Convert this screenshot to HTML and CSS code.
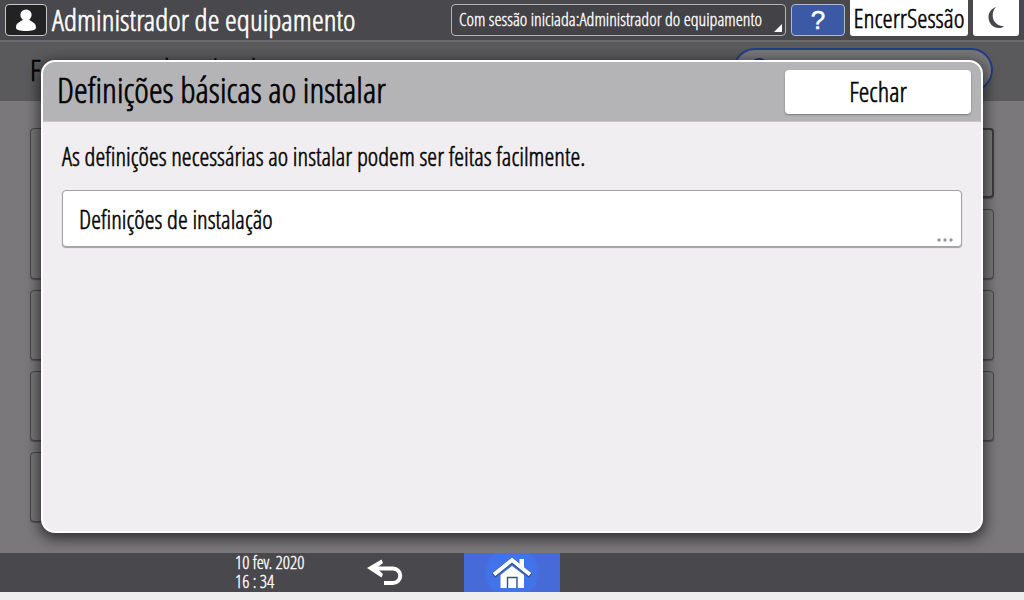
FILE: index.html
```html
<!DOCTYPE html>
<html lang="pt">
<head>
<meta charset="utf-8">
<meta name="viewport" content="width=device-width, initial-scale=1">
<title>Definições básicas ao instalar</title>
<link rel="stylesheet" href="styles.css">
</head>
<body>
<div class="screen">
  <header class="topbar">
    <span class="user-badge">
      <svg width="22" height="23" viewBox="0 0 22 23" aria-hidden="true"><circle cx="11" cy="6" r="5.6" fill="#fff"/><path d="M8 10.500C5 13.500 1 13.500 1 18.500c0 2.600 4.500 3.500 10 3.500s10-.9 10-3.500c0-5-4-5-7-8z" fill="#fff"/></svg>
    </span>
    <h1 class="topbar-title">Administrador de equipamento</h1>
    <div class="session">
      <select class="session-select" aria-label="Sessão"><option>Com sessão iniciada:Administrador do equipamento</option></select>
      <svg class="session-corner" width="8" height="8" viewBox="0 0 8 8" aria-hidden="true"><path d="M8 0v8H0z" fill="#fff"/></svg>
    </div>
    <button class="help" type="button" aria-label="Ajuda">?</button>
    <button class="logout" type="button">EncerrSessão</button>
    <button class="sleep" type="button" aria-label="Economia de energia">
      <svg width="18" height="24" viewBox="0 0 18 24" aria-hidden="true"><path d="M9 1C4 3 1.500 6.500 1.500 11c0 6.500 4.500 11 10.500 11 2 0 4-.7 5-1.800C11 20 6.500 16.500 5.800 11 5.400 7 6.500 3.500 9 1z" fill="#48474b"/></svg>
    </button>
  </header>

  <main class="stage">
    <div class="page-head">
      <h2 class="page-title">Ferramentas do utilizador</h2>
      <div class="search">
        <svg width="20" height="20" viewBox="0 0 20 20" aria-hidden="true"><circle cx="9" cy="9" r="7" fill="none" stroke="#1c3272" stroke-width="4"/></svg>
      </div>
    </div>
    <div class="tiles">
      <div class="tile tile-tall"></div>
      <div class="tile tile-active"></div>
      <div class="tile"></div>
      <div class="tile"></div>
      <div class="tile"></div>
      <div class="tile"></div>
      <div class="tile"></div>
      <div class="tile"></div>
    </div>

    <section class="dialog" role="dialog" aria-labelledby="dialog-title">
      <div class="dialog-head">
        <h2 class="dialog-title" id="dialog-title">Definições básicas ao instalar</h2>
        <button class="close" type="button">Fechar</button>
      </div>
      <div class="dialog-body">
        <p class="intro">As definições necessárias ao instalar podem ser feitas facilmente.</p>
        <button class="entry" type="button">
          <span>Definições de instalação</span>
          <svg class="entry-more" width="16" height="4" viewBox="0 0 16 4" aria-hidden="true"><g fill="#98989c"><circle cx="2" cy="2" r="1.700"/><circle cx="8" cy="2" r="1.700"/><circle cx="14" cy="2" r="1.700"/></g></svg>
        </button>
      </div>
    </section>
  </main>

  <footer class="bottombar">
    <div class="bottom-left">
      <div class="clock"><span>10 fev. 2020</span><span>16 : 34</span></div>
      <button class="back" type="button" aria-label="Voltar">
        <svg width="36" height="28" viewBox="0 0 36 28" aria-hidden="true"><path d="M6 9.500h20a7.200 7.200 0 0 1 0 14.500H17" fill="none" stroke="#fff" stroke-width="4"/><path d="M0 9L14.500.5 16 4 9.500 9l6.500 6-1.500 3.500z" fill="#fff"/></svg>
      </button>
    </div>
    <button class="home" type="button" aria-label="Início">
      <svg width="40" height="32" viewBox="0 0 40 32" aria-hidden="true"><path d="M8.500 31V18L20 9l12 9v13z" fill="#fff"/><path d="M15.500 31V20.500h9.500V31" fill="none" stroke="#34508f" stroke-width="1.400"/><path d="M1.500 18.500L20 3.500l18.500 15" fill="none" stroke="#34508f" stroke-width="5.500"/><path d="M27.500 2h4.500v9l-4.500-3.500z" fill="#fff"/><path d="M2 17.500L20 3l18 14.500" fill="none" stroke="#fff" stroke-width="4"/></svg>
    </button>
  </footer>
</div>
</body>
</html>
```
FILE: styles.css
```css
* {
  box-sizing: border-box;
  -webkit-text-stroke: 0.02em currentColor;
}

body {
  margin: 0;
  background: #eee;
  color: #000;
  font-family: "Open Sans Condensed Light", "Roboto Condensed", "Noto Sans", sans-serif;
  font-weight: 300;
}

h1, h2, p { margin: 0; font-weight: 300; }
button, select { font-family: inherit; font-weight: 300; color: inherit; margin: 0; padding: 0; border: 0; }
button { cursor: pointer; }
svg { display: block; }

.screen {
  display: flex;
  flex-direction: column;
  min-height: 100vh;
  padding-bottom: 8px;
}

.topbar {
  display: flex;
  align-items: center;
  gap: 5px;
  height: 40px;
  padding: 0 5px;
  background: #49484c;
  color: #fff;
}

.user-badge {
  display: flex;
  align-items: center;
  justify-content: center;
  width: 42px;
  height: 32px;
  border: 1px solid #c8c8c8;
  border-radius: 4px;
  background: #222124;
}

.topbar-title { flex: 1; font-size: 30px; line-height: 36px; white-space: nowrap; }

.session { position: relative; width: 335px; }
.session-select {
  appearance: none;
  display: block;
  width: 100%;
  height: 32px;
  padding: 0 7px 2px;
  border: 1px solid #b4b4b6;
  border-radius: 4px;
  background: #434246;
  color: #fff;
  font-size: 18px;
}
.session-corner { position: absolute; right: 4px; bottom: 4px; pointer-events: none; }

.help {
  width: 54px;
  height: 32px;
  border: 1px solid #b4b8c8;
  border-radius: 4px;
  background: #3b59a4;
  color: #fff;
  font-family: "Liberation Sans", sans-serif;
  font-size: 26px;
  line-height: 28px;
}

.logout, .sleep {
  align-self: flex-start;
  height: 36px;
  border-radius: 0 0 3px 3px;
  background: #fff;
  color: #000;
}
.logout { width: 118px; font-size: 26px; white-space: nowrap; }
.sleep { display: flex; align-items: center; justify-content: center; width: 46px; }

.stage {
  position: relative;
  flex: 1;
  overflow: hidden;
  background: #7a787b;
}

.page-head {
  display: flex;
  justify-content: space-between;
  height: 61px;
  padding: 6px 31px 0 30px;
  border-top: 2px solid #6b6a6d;
  background: #5a595b;
}
.page-title { font-size: 30px; line-height: 44px; }
.search {
  width: 260px;
  height: 44px;
  padding: 8px 15px;
  border: 2px solid #223c86;
  border-radius: 22px;
  background: #777678;
}

.tiles {
  display: grid;
  grid-template-columns: 1fr 1fr;
  grid-auto-rows: 70px;
  grid-auto-flow: row dense;
  gap: 11px;
  padding: 27px 30px 29px;
}
.tile { border: 1px solid #48484a; border-radius: 4px; background: #777; box-shadow: 0 1px 1px #555; }
.tile-tall { grid-row: span 2; }
.tile-active { border: 2px solid #3b3b3e; }
.tile:last-child { grid-column: 1; }

.dialog {
  position: absolute;
  inset: 20px 41px;
  display: flex;
  flex-direction: column;
  overflow: hidden;
  border: 2px solid #fff;
  border-radius: 14px;
  background: #f0eef1;
  box-shadow: 0 4px 14px 2px rgba(0, 0, 0, 0.6);
}
.dialog-head {
  display: flex;
  align-items: center;
  justify-content: space-between;
  height: 60px;
  padding: 0 10px 0 14px;
  border-bottom: 1px solid #c8c8ca;
  background: #b4b3b6;
}
.dialog-title { padding-bottom: 4px; font-size: 35px; line-height: 54px; }
.close {
  width: 186px;
  height: 44px;
  border-radius: 4px;
  background: #fff;
  box-shadow: 0 1px 2px #777;
  font-size: 27px;
}

.dialog-body { padding: 18px 19px; }
.intro { font-size: 25px; line-height: 32px; }
.entry {
  position: relative;
  display: flex;
  align-items: center;
  width: 100%;
  height: 57px;
  margin-top: 18px;
  padding: 0 16px;
  border: 1px solid #a2a1a4;
  border-radius: 4px;
  background: #fff;
  box-shadow: 0 1px 1px #a0a0a2;
  font-size: 25px;
}
.entry-more { position: absolute; right: 8px; bottom: 4px; }

.bottombar {
  display: grid;
  grid-template-columns: 1fr 96px 1fr;
  height: 39px;
  background: #49484c;
  color: #fff;
}
.bottom-left { display: flex; justify-content: flex-end; gap: 42px; padding-right: 61px; }
.clock { display: flex; flex-direction: column; width: 90px; font-size: 18px; line-height: 19px; white-space: nowrap; }
.back { display: flex; align-items: center; background: none; }
.home {
  display: flex;
  align-items: center;
  justify-content: center;
  background: radial-gradient(circle, #3f74ee 0, #4273e8 24px, #466bd8 28px);
}
```
